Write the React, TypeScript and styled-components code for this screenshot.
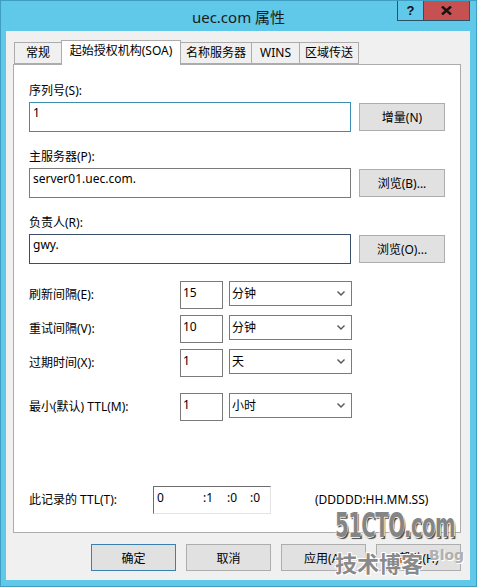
import styled, { createGlobalStyle } from 'styled-components';

const GlobalStyle = createGlobalStyle`
  body {
    margin: 0;
    font-family: 'Noto Sans', 'Noto Sans CJK SC', sans-serif;
    font-size: 12px;
    color: #000;
  }
`;

const Window = styled.div`
  position: relative;
  width: 477px;
  height: 587px;
  box-sizing: border-box;
  background: #60c8e8;
  border: 1px solid #3f9fc2;
  display: flex;
  flex-direction: column;
  overflow: hidden;
`;

const TitleBar = styled.div`
  display: grid;
  grid-template-columns: 1fr auto 1fr;
  height: 30px;
`;

const Title = styled.div`
  grid-column: 2;
  align-self: center;
  font-size: 15px;
  line-height: 20px;
  color: #1b1b1b;
  padding-top: 1px;
`;

const Caption = styled.div`
  grid-column: 3;
  justify-self: end;
  align-self: start;
  display: flex;
  margin: -1px 6px 0 0;
`;

const CapButton = styled.div<{ $close?: boolean }>`
  width: ${(p) => (p.$close ? 46 : 27)}px;
  height: 21px;
  box-sizing: border-box;
  border: 1px solid #2d5266;
  border-left-width: ${(p) => (p.$close ? 0 : 1)}px;
  background: ${(p) => (p.$close ? '#c75050' : 'transparent')};
  display: flex;
  align-items: center;
  justify-content: center;
  font-family: 'Liberation Sans', sans-serif;
  font-weight: bold;
  font-size: 13px;
  color: #111;
`;

const Client = styled.div`
  flex: 1;
  margin: 0 6px 6px 5px;
  background: #f0f0f0;
  padding: 9px 9px 0 7px;
  display: flex;
  flex-direction: column;
`;

const TabStrip = styled.div`
  display: flex;
  align-items: flex-end;
  height: 24px;
  padding-left: 2px;
`;

const Tab = styled.div<{ $w: number; $active?: boolean }>`
  width: ${(p) => p.$w}px;
  height: ${(p) => (p.$active ? 25 : 22)}px;
  box-sizing: border-box;
  border: 1px solid #acacac;
  border-bottom: ${(p) => (p.$active ? 'none' : '1px solid #acacac')};
  margin-left: -1px;
  background: ${(p) => (p.$active ? '#fff' : '#f0f0f0')};
  position: relative;
  z-index: ${(p) => (p.$active ? 1 : 0)};
  margin-bottom: ${(p) => (p.$active ? -1 : 0)}px;
  text-align: center;
  line-height: 20px;
  white-space: nowrap;
`;

const Panel = styled.div`
  height: 469px;
  box-sizing: border-box;
  background: #fff;
  border: 1px solid #acacac;
  padding: 0 15px 18px 15px;
  display: flex;
  flex-direction: column;
`;

const FieldLabel = styled.div<{ $first?: boolean }>`
  line-height: 16px;
  margin-top: ${(p) => (p.$first ? 18 : 17)}px;
`;

const FieldRow = styled.div`
  display: flex;
  align-items: center;
  gap: 8px;
  margin-top: 3px;
`;

const TextBox = styled.div<{ $border: string }>`
  width: 322px;
  height: 30px;
  box-sizing: border-box;
  border: 1px solid ${(p) => p.$border};
  padding: 2px 3px;
  line-height: 16px;
`;

const Button = styled.div<{ $default?: boolean }>`
  width: 86px;
  height: 28px;
  box-sizing: border-box;
  background: #e1e1e1;
  border: 1px solid ${(p) => (p.$default ? '#3c7fb1' : '#adadad')};
  display: flex;
  align-items: center;
  justify-content: center;
  white-space: nowrap;
`;

const IntervalRow = styled.div<{ $gap: number }>`
  display: flex;
  align-items: flex-start;
  margin-top: ${(p) => p.$gap}px;
`;

const RowLabel = styled.div<{ $w: number }>`
  width: ${(p) => p.$w}px;
  line-height: 28px;
  white-space: nowrap;
`;

const NumBox = styled.div`
  width: 43px;
  height: 28px;
  box-sizing: border-box;
  border: 1px solid #7a7a7a;
  padding: 3px 2px;
  line-height: 16px;
`;

const Select = styled.div`
  width: 123px;
  height: 25px;
  margin-left: 6px;
  box-sizing: border-box;
  border: 1px solid #7a7a7a;
  background: #fff;
  display: flex;
  align-items: center;
  justify-content: space-between;
  padding: 0 6px 0 2px;
  line-height: 16px;
`;

const TtlRow = styled.div`
  display: flex;
  align-items: flex-start;
  margin-top: auto;
`;

const TtlBox = styled.div`
  width: 118px;
  height: 28px;
  box-sizing: border-box;
  border-style: solid;
  border-width: 1px;
  border-color: #6d6d6d #e3e3e3 #e3e3e3 #6d6d6d;
  padding: 3px 0 0 3px;
  display: flex;
  line-height: 16px;
`;

const Seg = styled.span<{ $w: number }>`
  display: inline-block;
  width: ${(p) => p.$w}px;
`;

const Format = styled.div`
  margin-left: 44px;
  line-height: 28px;
`;

const Footer = styled.div`
  display: flex;
  justify-content: flex-end;
  gap: 10px;
  margin-top: 11px;
`;

const FootButton = styled(Button)`
  width: 85px;
  height: 27px;
`;

/* watermark stamped over the bottom-right corner of the screenshot */
const Watermark = styled.div`
  position: absolute;
  left: 334px;
  top: 505px;
  font-family: 'DejaVu Sans', sans-serif;
  font-weight: bold;
  font-size: 33px;
  line-height: 40px;
  letter-spacing: -1px;
  color: #858585;
  transform: scaleX(0.6);
  transform-origin: left top;
  text-shadow: -1px -1px 0 #fff, 1px -1px 0 #fff, -1px 1px 0 #eee, 2px 2px 1px #4a4a4a;
  white-space: nowrap;
`;

const WatermarkCn = styled.div`
  position: absolute;
  left: 334px;
  top: 547px;
  font-family: 'Noto Sans CJK SC', sans-serif;
  font-weight: bold;
  font-size: 22px;
  line-height: 28px;
  color: #8a8a8a;
  text-shadow: -1px -1px 0 #fff, 1px -1px 0 #fff, -1px 1px 0 #fff, 1px 1px 0 #fff;
  white-space: nowrap;
`;

const WatermarkBlog = styled.div`
  position: absolute;
  left: 428px;
  top: 546px;
  font-family: 'DejaVu Sans', sans-serif;
  font-weight: bold;
  font-size: 14px;
  color: #b0b0b0;
  text-shadow: 1px 1px 0 #fff;
`;

const Chevron = () => (
  <svg width="8" height="5" viewBox="0 0 8 5">
    <polyline points="0.5,0.5 4,4 7.5,0.5" fill="none" stroke="#555" strokeWidth="1.4" />
  </svg>
);

const intervals = [
  { label: '刷新间隔(E):', value: '15', unit: '分钟', gap: 17 },
  { label: '重试间隔(V):', value: '10', unit: '分钟', gap: 6 },
  { label: '过期时间(X):', value: '1', unit: '天', gap: 6 },
  { label: '最小(默认) TTL(M):', value: '1', unit: '小时', gap: 16 },
];

const App = () => {
  return (
    <>
      <GlobalStyle />
      <Window>
        <TitleBar>
          <Title>uec.com 属性</Title>
          <Caption>
            <CapButton>?</CapButton>
            <CapButton $close>
              <svg width="11" height="9" viewBox="0 0 11 9">
                <path d="M1 0.5 L10 8.5 M10 0.5 L1 8.5" stroke="#151515" strokeWidth="2.4" />
              </svg>
            </CapButton>
          </Caption>
        </TitleBar>
        <Client>
          <TabStrip>
            <Tab $w={48}>常规</Tab>
            <Tab $w={120} $active>起始授权机构(SOA)</Tab>
            <Tab $w={72}>名称服务器</Tab>
            <Tab $w={49}>WINS</Tab>
            <Tab $w={60}>区域传送</Tab>
          </TabStrip>
          <Panel>
            <FieldLabel $first>序列号(S):</FieldLabel>
            <FieldRow>
              <TextBox $border="#3c8db4">1</TextBox>
              <Button>增量(N)</Button>
            </FieldRow>
            <FieldLabel>主服务器(P):</FieldLabel>
            <FieldRow>
              <TextBox $border="#7a7a7a">server01.uec.com.</TextBox>
              <Button>浏览(B)...</Button>
            </FieldRow>
            <FieldLabel>负责人(R):</FieldLabel>
            <FieldRow>
              <TextBox $border="#3a5068">gwy.</TextBox>
              <Button>浏览(O)...</Button>
            </FieldRow>
            {intervals.map((row) => (
              <IntervalRow key={row.label} $gap={row.gap}>
                <RowLabel $w={151}>{row.label}</RowLabel>
                <NumBox>{row.value}</NumBox>
                <Select>
                  <span>{row.unit}</span>
                  <Chevron />
                </Select>
              </IntervalRow>
            ))}
            <TtlRow>
              <RowLabel $w={124}>此记录的 TTL(T):</RowLabel>
              <TtlBox>
                <Seg $w={46}>0</Seg>
                <Seg $w={24}>:1</Seg>
                <Seg $w={23}>:0</Seg>
                <Seg $w={20}>:0</Seg>
              </TtlBox>
              <Format>(DDDDD:HH.MM.SS)</Format>
            </TtlRow>
          </Panel>
          <Footer>
            <FootButton $default>确定</FootButton>
            <FootButton>取消</FootButton>
            <FootButton>应用(A)</FootButton>
            <FootButton>帮助(H)</FootButton>
          </Footer>
        </Client>
        <Watermark>51CTO.com</Watermark>
        <WatermarkCn>技术博客</WatermarkCn>
        <WatermarkBlog>Blog</WatermarkBlog>
      </Window>
    </>
  );
};

export default App;
